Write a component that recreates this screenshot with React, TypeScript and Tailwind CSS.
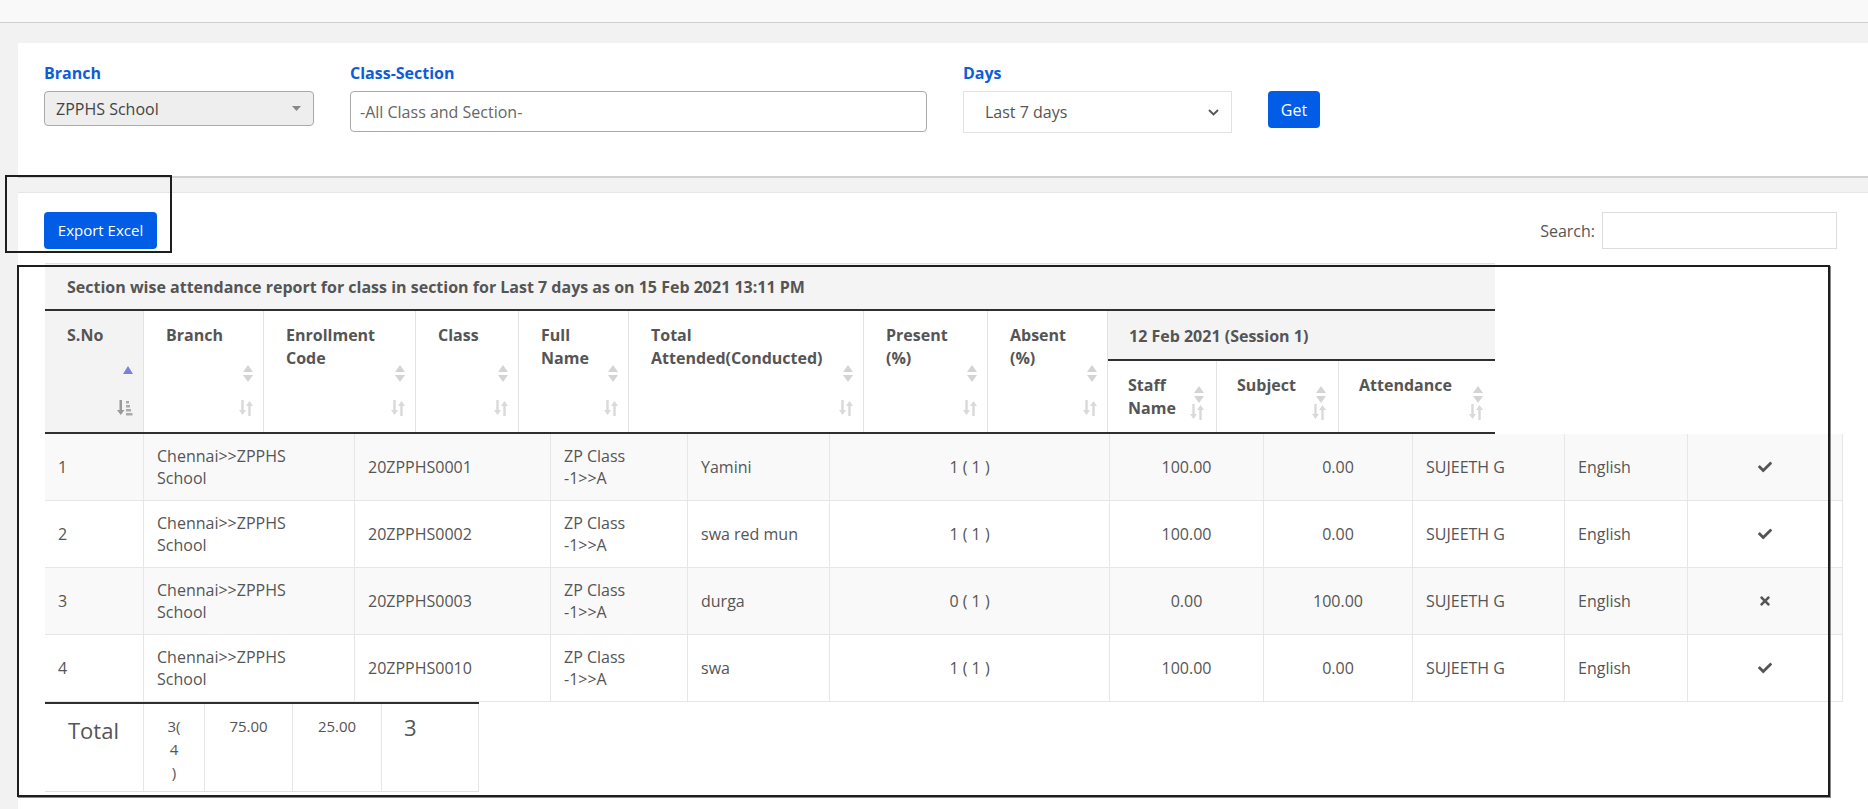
import { FaCheck, FaTimes } from "react-icons/fa";

const headCols = "grid-cols-[99px_120px_152px_103px_110px_235px_124px_120px_109px_122px_156px]";
const bodyCols = "grid-cols-[99px_211px_196px_137px_142px_280px_154px_149px_152px_123px_155px]";

const rows = [
  { no: 1, code: "20ZPPHS0001", name: "Yamini", total: "1 ( 1 )", present: "100.00", absent: "0.00", ok: true },
  { no: 2, code: "20ZPPHS0002", name: "swa red mun", total: "1 ( 1 )", present: "100.00", absent: "0.00", ok: true },
  { no: 3, code: "20ZPPHS0003", name: "durga", total: "0 ( 1 )", present: "0.00", absent: "100.00", ok: false },
  { no: 4, code: "20ZPPHS0010", name: "swa", total: "1 ( 1 )", present: "100.00", absent: "0.00", ok: true },
];

function SortPair({ active }: { active?: boolean }) {
  if (active) {
    return (
      <svg width="10" height="8" viewBox="0 0 10 8">
        <path d="M5 0 L10 8 L0 8 Z" fill="#7b7fe0" />
      </svg>
    );
  }
  return (
    <svg width="10" height="17" viewBox="0 0 10 17">
      <path d="M5 0 L10 7 L0 7 Z" fill="#d4d4d4" />
      <path d="M0 10 L10 10 L5 17 Z" fill="#d4d4d4" />
    </svg>
  );
}

function SortArrows({ amount }: { amount?: boolean }) {
  if (amount) {
    return (
      <svg width="16" height="16" viewBox="0 0 16 16">
        <path d="M2.5 0 L5 0 L5 10 L7.5 10 L3.75 15 L0 10 L2.5 10 Z" fill="#999" />
        <rect x="9" y="1" width="3" height="2.5" fill="#aaa" />
        <rect x="9" y="5" width="4" height="2.5" fill="#aaa" />
        <rect x="9" y="9" width="5" height="2.5" fill="#aaa" />
        <rect x="9" y="13" width="6.5" height="2.5" fill="#aaa" />
      </svg>
    );
  }
  return (
    <svg width="14" height="16" viewBox="0 0 14 16">
      <path d="M2.3 0 L4.7 0 L4.7 10 L7 10 L3.5 15 L0 10 L2.3 10 Z" fill="#d9d9d9" />
      <path d="M9.3 16 L11.7 16 L11.7 6 L14 6 L10.5 1 L7 6 L9.3 6 Z" fill="#d9d9d9" />
    </svg>
  );
}

function Head({ children, active, sub, className = "" }: { children: React.ReactNode; active?: boolean; sub?: boolean; className?: string }) {
  return (
    <div className={`relative border-r border-[#e3e3e3] pt-[13px] ${sub ? "pl-[20px]" : "pl-[22px]"} ${className}`}>
      <div className="leading-[23px]">{children}</div>
      {sub ? (
        <>
          <div className="absolute right-[12px] top-[25px]">
            <SortPair />
          </div>
          <div className="absolute right-[12px] bottom-[12px]">
            <SortArrows />
          </div>
        </>
      ) : (
        <>
          <div className={`absolute right-[10px] ${active ? "top-[55px]" : "top-[54px]"}`}>
            <SortPair active={active} />
          </div>
          <div className="absolute right-[10px] bottom-[16px]">
            <SortArrows amount={active} />
          </div>
        </>
      )}
    </div>
  );
}

export default function App() {
  return (
    <div className="relative min-h-screen bg-[#f2f2f2] text-[#555] font-['Open_Sans',_'Liberation_Sans',_sans-serif]">
      <div className="h-[23px] bg-[#f9f9f9] border-b border-[#cfcfcf]" />

      {/* filters */}
      <div className="ml-[18px] mt-[20px] h-[135px] bg-white border-b-2 border-[#d2d2d2] pt-[19px] pl-[26px]">
        <div className="flex items-start gap-[36px]">
          <div>
            <div className="text-[16px] font-bold leading-[22px] text-[#0d5ddb] mb-[7px]">Branch</div>
            <div className="w-[270px] h-[35px] bg-[#eeeeee] border border-[#aaa] rounded-[4px] flex items-center justify-between pl-[11px] pr-[12px] text-[16px] text-[#444]">
              <span>ZPPHS School</span>
              <svg width="9" height="5" viewBox="0 0 9 5">
                <path d="M0 0 L9 0 L4.5 5 Z" fill="#888" />
              </svg>
            </div>
          </div>
          <div>
            <div className="text-[16px] font-bold leading-[22px] text-[#0d5ddb] mb-[7px]">Class-Section</div>
            <div className="w-[577px] h-[41px] border border-[#aaa] rounded-[4px] flex items-center pl-[9px] text-[16px] text-[#666]">
              -All Class and Section-
            </div>
          </div>
          <div>
            <div className="text-[16px] font-bold leading-[22px] text-[#0d5ddb] mb-[7px]">Days</div>
            <div className="w-[269px] h-[42px] border border-[#e2e2e2] flex items-center justify-between pl-[21px] pr-[12px] text-[16px] text-[#555]">
              <span>Last 7 days</span>
              <svg width="11" height="7" viewBox="0 0 11 7">
                <path d="M1 1 L5.5 5.5 L10 1" stroke="#555" strokeWidth="1.8" fill="none" />
              </svg>
            </div>
          </div>
          <button className="mt-[29px] w-[52px] h-[37px] bg-[#015de6] rounded-[4px] text-white text-[16px]">Get</button>
        </div>
      </div>

      {/* report */}
      <div className="ml-[18px] mt-[14px] bg-white border-t border-[#e6e6e6] pt-[19px] pl-[26px] pr-[31px] pb-[20px]">
        <div className="flex items-center justify-between">
          <button className="w-[113px] h-[37px] bg-[#015de6] rounded-[4px] text-white text-[15px]">Export Excel</button>
          <div className="flex items-center gap-[7px]">
            <span className="text-[16px] text-[#555]">Search:</span>
            <div className="w-[235px] h-[37px] border border-[#dcdcdc]" />
          </div>
        </div>

        <div className="mt-[14px] ml-px">
          <div className="w-[1450px] h-[48px] bg-[#f4f4f4] border-t border-[#e2e2e2] border-b-2 border-b-[#2f2f2f] flex items-center pl-[22px] text-[16px] font-bold">
            Section wise attendance report for class in section for Last 7 days as on 15 Feb 2021 13:11 PM
          </div>
          <div className={`grid ${headCols} grid-rows-[50px_71px] w-[1450px] border-b-2 border-[#2f2f2f] text-[16px] font-bold`}>
            <Head active className="row-span-2 bg-[#f3f3f3]">S.No</Head>
            <Head className="row-span-2">Branch</Head>
            <Head className="row-span-2">Enrollment<br />Code</Head>
            <Head className="row-span-2">Class</Head>
            <Head className="row-span-2">Full<br />Name</Head>
            <Head className="row-span-2">Total<br />Attended(Conducted)</Head>
            <Head className="row-span-2">Present<br />(%)</Head>
            <Head className="row-span-2">Absent<br />(%)</Head>
            <div className="col-span-3 bg-[#f4f4f4] border-b-2 border-[#2f2f2f] pl-[21px] pt-[14px] leading-[23px]">12 Feb 2021 (Session 1)</div>
            <Head sub>Staff<br />Name</Head>
            <Head sub>Subject</Head>
            <Head sub className="border-r-0">Attendance</Head>
          </div>

          <div className="w-[1798px] text-[16px] text-[#555]">
            {rows.map((r, i) => (
              <div key={r.no} className={`grid ${bodyCols} h-[67px] border-b border-[#e6e6e6] ${i % 2 === 0 ? "bg-[#f9f9f9]" : "bg-white"}`}>
                <div className="flex items-center px-[13px] border-r border-[#e6e6e6]">{r.no}</div>
                <div className="flex items-center px-[13px] border-r border-[#e6e6e6] leading-[22px]">Chennai&gt;&gt;ZPPHS<br />School</div>
                <div className="flex items-center px-[13px] border-r border-[#e6e6e6]">{r.code}</div>
                <div className="flex items-center px-[13px] border-r border-[#e6e6e6] leading-[22px]">ZP Class<br />-1&gt;&gt;A</div>
                <div className="flex items-center px-[13px] border-r border-[#e6e6e6]">{r.name}</div>
                <div className="flex items-center justify-center border-r border-[#e6e6e6]">{r.total}</div>
                <div className="flex items-center justify-center border-r border-[#e6e6e6]">{r.present}</div>
                <div className="flex items-center justify-center border-r border-[#e6e6e6]">{r.absent}</div>
                <div className="flex items-center px-[13px] border-r border-[#e6e6e6]">SUJEETH G</div>
                <div className="flex items-center px-[13px] border-r border-[#e6e6e6]">English</div>
                <div className="flex items-center justify-center border-r border-[#e6e6e6]">
                  {r.ok ? <FaCheck size={14} color="#555" /> : <FaTimes size={14} color="#555" />}
                </div>
              </div>
            ))}
          </div>

          <div className="grid grid-cols-[99px_61px_88px_89px_97px] w-[434px] h-[90px] border-t-2 border-[#2f2f2f] border-b border-b-[#e0e0e0]">
            <div className="border-r border-[#e6e6e6] pl-[23px] pt-[11px] text-[22px] leading-[30px]">Total</div>
            <div className="border-r border-[#e6e6e6] text-center pt-[11px] text-[15px] leading-[23px]">3(<br />4<br />)</div>
            <div className="border-r border-[#e6e6e6] text-center pt-[11px] text-[15px] leading-[23px]">75.00</div>
            <div className="border-r border-[#e6e6e6] text-center pt-[11px] text-[15px] leading-[23px]">25.00</div>
            <div className="border-r border-[#e6e6e6] pl-[22px] pt-[8px] text-[22px] leading-[30px]">3</div>
          </div>
        </div>
      </div>

      {/* annotation boxes */}
      <div className="absolute left-[5px] top-[175px] w-[167px] h-[78px] border-2 border-[#1e1e1e]" />
      <div className="absolute left-[17px] top-[265px] w-[1813px] h-[532px] border-2 border-[#1e1e1e] shadow-[1px_1px_0_#888]" />
    </div>
  );
}
